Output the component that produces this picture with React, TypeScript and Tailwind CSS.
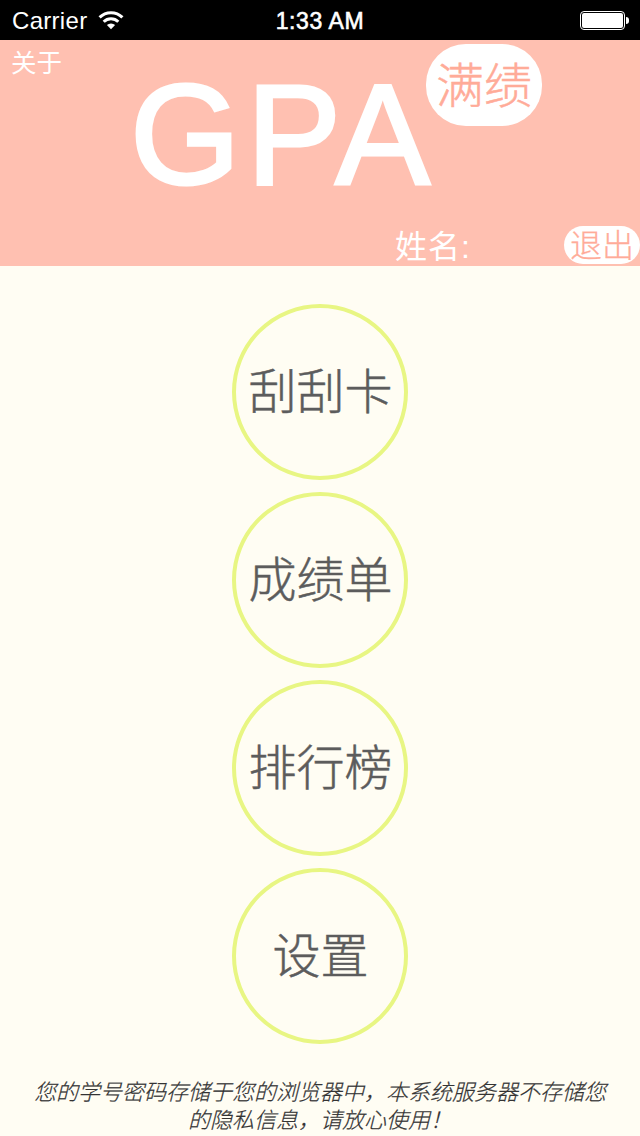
const menuItems = [
  { id: 'scratch', label: '刮刮卡' },
  { id: 'transcript', label: '成绩单' },
  { id: 'ranking', label: '排行榜' },
  { id: 'settings', label: '设置' },
];

function WifiIcon() {
  return (
    <svg className="ml-[11px] h-[19px] w-[26px]" viewBox="0 0 26 19" fill="none" stroke="#fff">
      <path d="M1.6 6.4a16 16 0 0 1 22.8 0" strokeWidth="3" />
      <path d="M5.7 10.7a10.4 10.4 0 0 1 14.6 0" strokeWidth="3" />
      <path d="M13 18.2 8.9 14.1a5.8 5.8 0 0 1 8.2 0Z" fill="#fff" stroke="none" />
    </svg>
  );
}

function StatusBar() {
  return (
    <div className="grid h-10 shrink-0 grid-cols-3 items-center bg-black text-white">
      <div className="flex items-center pl-3">
        <span className="pt-0.5 text-[24px] leading-[38px] tracking-[0.3px]">Carrier</span>
        <WifiIcon />
      </div>
      <div className="pt-0.5 text-center text-[23px] leading-[38px] tracking-[0.6px] [-webkit-text-stroke:0.6px_#fff]">1:33 AM</div>
      <div className="flex items-center justify-end pr-[11px]">
        <div className="h-[19px] w-[45px] rounded-[4px] border border-white p-px">
          <div className="h-full w-full rounded-[2px] bg-white" />
        </div>
        <div className="ml-px h-[7px] w-[3px] rounded-r-full bg-white" />
      </div>
    </div>
  );
}

function Header() {
  return (
    <header className="relative flex h-[226px] shrink-0 flex-col justify-between bg-[#ffc0b1] text-white">
      <div className="flex items-start">
        <button className="ml-[11px] mt-[5px] text-[25.5px] leading-9">关于</button>
        <h1 className="ml-[68px] mt-[13px] text-[142px] leading-[164px] [font-kerning:none] [-webkit-text-stroke:3px_#fff]">
          <span className="tracking-[6px]">G</span>
          <span className="tracking-[-6px]">P</span>A
        </h1>
      </div>
      <div className="flex items-center justify-end pb-[2px]">
        <span className="mr-[93px] pt-[5px] text-[32px] leading-[33px] tracking-[1px]">姓名:</span>
        <button className="h-[38px] w-[76px] rounded-[19px] bg-white pt-px text-[32px] font-light leading-9 text-[#ffab98] [-webkit-text-stroke:0.3px_#ffab98]">
          退出
        </button>
      </div>

      {/* Full-marks badge over the title */}
      <div className="absolute left-[426px] top-1 flex h-[82px] w-[116px] items-center justify-center rounded-[40px] bg-white pt-[3px] text-[48px] font-light text-[#ffab98] [-webkit-text-stroke:0.5px_#ffab98]">
        满绩
      </div>
    </header>
  );
}

export default function App() {
  return (
    <div className="flex h-[1136px] w-[640px] flex-col overflow-hidden bg-[#fffdf3] font-['Liberation_Sans','Noto_Sans_CJK_SC',sans-serif]">
      <StatusBar />
      <Header />
      <nav className="mt-[38px] flex flex-col items-center gap-3">
        {menuItems.map((item) => (
          <button
            key={item.id}
            className="flex h-44 w-44 items-center justify-center whitespace-nowrap rounded-full border-4 border-[#e8f683] pl-px pt-px text-[48px] font-light text-[#5c5c5c] [-webkit-text-stroke:0.5px_#5c5c5c]"
          >
            {item.label}
          </button>
        ))}
      </nav>
      <p className="mt-[35px] text-center text-[22px] font-light italic leading-7 text-[#333] [-webkit-text-stroke:0.2px_#333]">
        您的学号密码存储于您的浏览器中，本系统服务器不存储您
        <br />
        的隐私信息，请放心使用！
      </p>
    </div>
  );
}
